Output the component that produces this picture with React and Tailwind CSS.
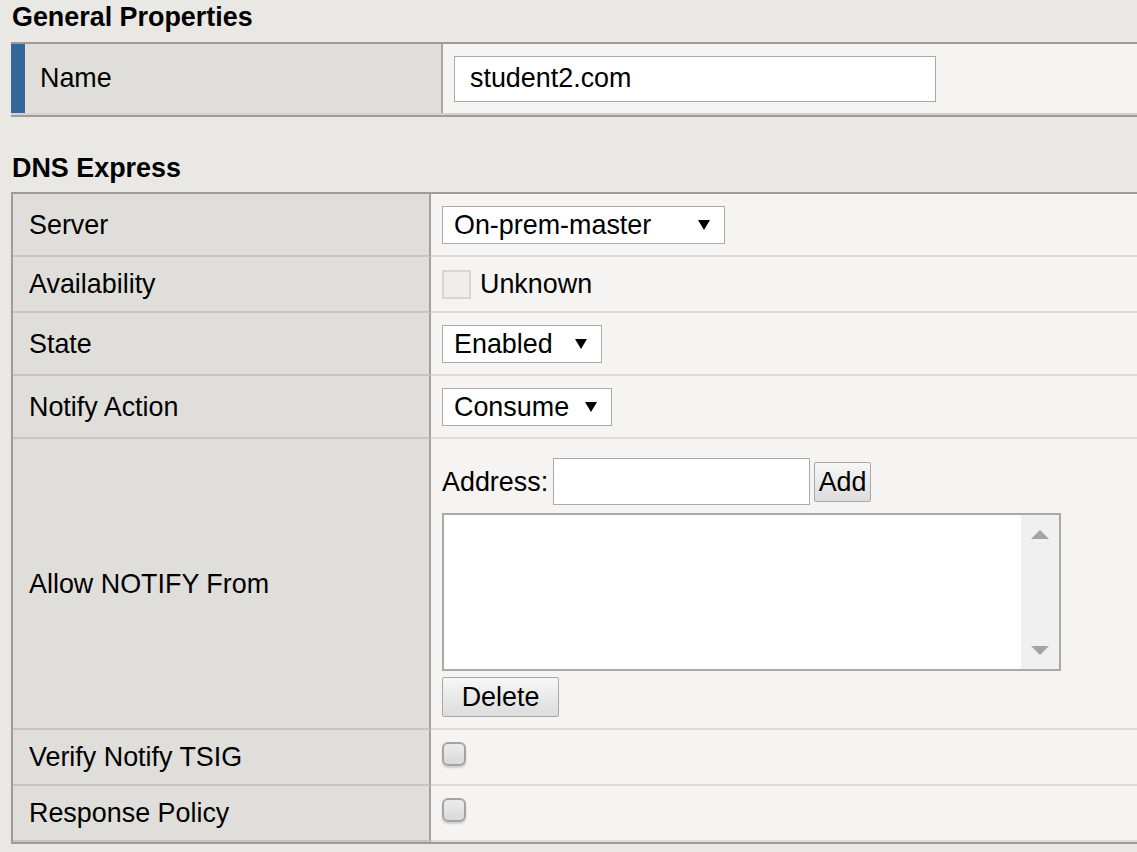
import React from 'react';

const BORDER_DARK = 'border-[#9e9c99]';

function Arrow() {
    return (
        <svg width="12" height="12" viewBox="0 0 12 12" className="flex-none">
            <polygon points="0,1 12,1 6,11" fill="#000" />
        </svg>
    );
}

function Select({ value, className }) {
    return (
        <div className={`flex items-center justify-between h-[38px] bg-white border border-[#a9a9a9] pl-[11px] pr-[14px] ${className}`}>
            <span>{value}</span>
            <Arrow />
        </div>
    );
}

function Checkbox() {
    return (
        <div className="w-[24px] h-[24px] -mt-[6px] rounded-[6px] border-2 border-[#a3a3a3] bg-gradient-to-b from-[#ebebeb] to-[#dadada] shadow-[0_2px_2px_rgba(0,0,0,0.15)]"></div>
    );
}

function Button({ children, className }) {
    return (
        <div className={`flex items-center justify-center h-[40px] border border-[#a8a8a8] rounded-[2px] bg-gradient-to-b from-[#f7f7f7] to-[#dcdcdc] ${className}`}>
            {children}
        </div>
    );
}

// one row of the DNS Express table
function Row({ label, h, children }) {
    return (
        <div className={`flex ${h}`}>
            <div className="flex-none w-[418px] flex items-center pl-[16px] bg-[#dfdedb] border-r-2 border-r-[#a3a2a0] border-b-2 border-b-[#c6c5c2]">
                {label}
            </div>
            <div className="flex-1 flex items-center pl-[11px] bg-[#f5f4f2] border-b-2 border-b-[#dddcd9]">
                {children}
            </div>
        </div>
    );
}

export default function App() {
    return (
        <div className="w-[1137px] h-[852px] overflow-hidden bg-[#e9e8e4] text-black text-[26.9px] leading-[30px] font-['Liberation_Sans',Arial,sans-serif]">

            {/* General Properties */}
            <h2 className="h-[42px] pt-[2px] pl-[12px] font-bold">General Properties</h2>
            <div className={`ml-[11px] w-[1160px] border-t-2 border-b-2 ${BORDER_DARK}`}>
                <div className="flex h-[71px] border-b-2 border-[#d3d2cf]">
                    <div className="flex-none w-[14px] bg-[#336699]"></div>
                    <div className="flex-none w-[418px] flex items-center pl-[15px] pb-[2px] bg-[#dfdedb] border-r-2 border-[#a8a7a4]">
                        Name
                    </div>
                    <div className="flex-1 flex items-center pl-[11px] bg-[#f5f4f2]">
                        <div className="w-[482px] h-[46px] flex items-center pl-[15px] pb-[2px] bg-white border border-[#a9a9a9]">
                            student2.com
                        </div>
                    </div>
                </div>
            </div>

            {/* DNS Express */}
            <h2 className="mt-[36px] h-[39px] pl-[12px] font-bold">DNS Express</h2>
            <div className={`ml-[11px] w-[1160px] border-t-2 border-l-2 border-b-2 ${BORDER_DARK}`}>
                <Row label="Server" h="h-[63px]">
                    <Select value="On-prem-master" className="w-[283px]" />
                </Row>
                <Row label="Availability" h="h-[56px]">
                    <div className="w-[29px] h-[29px] border-2 border-[#d6d5d2] bg-[#efeeec]"></div>
                    <span className="ml-[9px]">Unknown</span>
                </Row>
                <Row label="State" h="h-[63px]">
                    <Select value="Enabled" className="w-[160px]" />
                </Row>
                <Row label="Notify Action" h="h-[63px]">
                    <Select value="Consume" className="w-[170px]" />
                </Row>
                <Row label="Allow NOTIFY From" h="h-[291px]">
                    <div className="flex flex-col self-start pt-[19px]">
                        <div className="flex items-center">
                            <span>Address:</span>
                            <div className="ml-[5px] w-[257px] h-[47px] bg-white border border-[#a9a9a9]"></div>
                            <Button className="ml-[4px] w-[57px]">Add</Button>
                        </div>
                        <div className="mt-[8px] w-[619px] h-[158px] flex bg-white border-2 border-[#a9a9a9]">
                            <div className="flex-1"></div>
                            <div className="w-[38px] flex flex-col items-center justify-between bg-[#f0f0f0] pt-[15px] pb-[14px]">
                                <svg width="18" height="9" viewBox="0 0 18 9">
                                    <polygon points="9,0 18,9 0,9" fill="#a3a3a3" />
                                </svg>
                                <svg width="18" height="9" viewBox="0 0 18 9">
                                    <polygon points="0,0 18,0 9,9" fill="#a3a3a3" />
                                </svg>
                            </div>
                        </div>
                        <Button className="mt-[6px] w-[117px]">Delete</Button>
                    </div>
                </Row>
                <Row label="Verify Notify TSIG" h="h-[56px]">
                    <Checkbox />
                </Row>
                <Row label="Response Policy" h="h-[56px]">
                    <Checkbox />
                </Row>
            </div>
        </div>
    );
}
